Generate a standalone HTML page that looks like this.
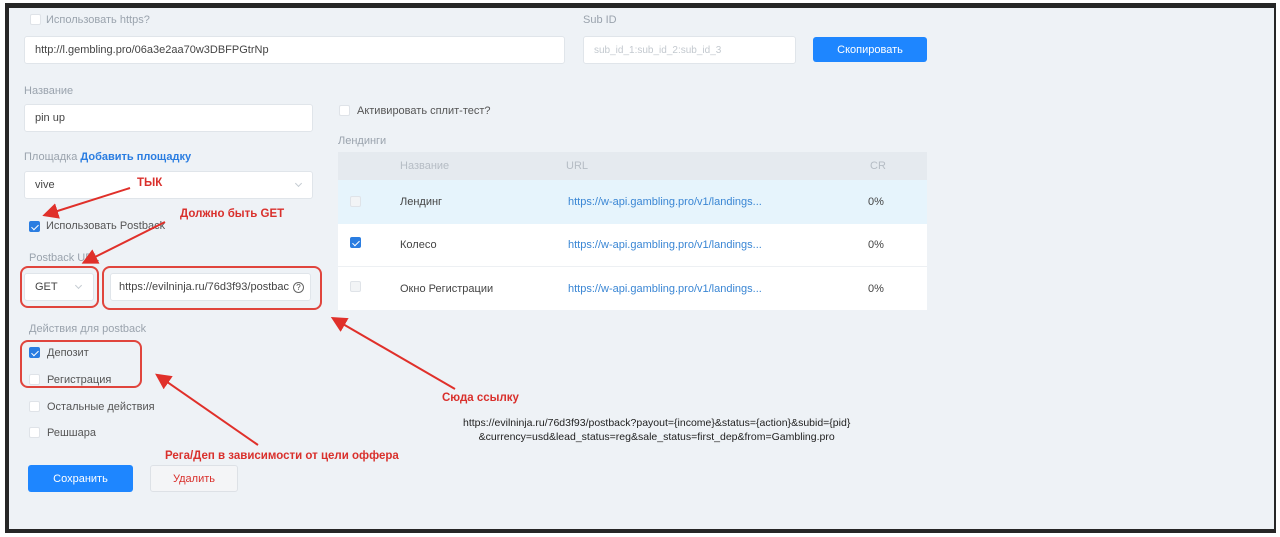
<!DOCTYPE html>
<html><head><meta charset="utf-8"><style>
*{box-sizing:border-box;margin:0;padding:0}
body{width:1280px;height:537px;background:#fff;position:relative;overflow:hidden;font-family:"Liberation Sans","DejaVu Sans",sans-serif;font-size:11px;color:#444}
.frame{position:absolute;left:5px;top:3px;width:1271px;height:530px;border:4px solid #262626;border-top-width:5px;border-right-width:2px;background:#eef2f6}
.a{position:absolute;white-space:nowrap}
.lbl{color:#9aa3ad;font-size:11px}
.inp{position:absolute;background:#fff;border:1px solid #e0e5ea;border-radius:3px;padding-left:10px;display:flex;align-items:center;font-size:11px;color:#444}
.cb{position:absolute;width:11px;height:11px;border:1px solid #dfe3e8;background:#fff;border-radius:2px}
.cb.on{background:#2a7de1;border-color:#2a7de1}
.cb.on::after{content:"";position:absolute;left:3px;top:1px;width:3px;height:6px;border:solid #fff;border-width:0 1.6px 1.6px 0;transform:rotate(45deg)}
.red{color:#d9302c;font-weight:bold;font-size:11.5px}
.rbox{position:absolute;border:2px solid #e0453d;border-radius:8px}
.btn{position:absolute;border-radius:3px;display:flex;align-items:center;justify-content:center;font-size:11px}
.chev{position:absolute;width:5px;height:5px;border:solid #c5cbd2;border-width:0 1px 1px 0;transform:rotate(45deg)}
.tr{position:absolute;left:338px;width:589px;display:flex;align-items:center;font-size:11px}
.link{color:#3a86d4}
</style></head><body>
<div class="frame"></div>

<div class="cb" style="left:30px;top:14px"></div>
<div class="a lbl" style="left:46px;top:14px">Использовать https?</div>
<div class="inp" style="left:24px;top:36px;width:541px;height:28px">http://l.gembling.pro/06a3e2aa70w3DBFPGtrNp</div>
<div class="a lbl" style="left:583px;top:14px">Sub ID</div>
<div class="inp" style="left:583px;top:36px;width:213px;height:28px;color:#c3c9cf;font-size:10px">sub_id_1:sub_id_2:sub_id_3</div>
<div class="btn" style="left:813px;top:37px;width:114px;height:25px;background:#1e86ff;color:#fff">Скопировать</div>

<div class="a lbl" style="left:24px;top:85px">Название</div>
<div class="inp" style="left:24px;top:104px;width:289px;height:28px">pin up</div>
<div class="cb" style="left:339px;top:105px"></div>
<div class="a" style="left:357px;top:105px;font-size:11px;color:#555">Активировать сплит-тест?</div>
<div class="a lbl" style="left:338px;top:135px">Лендинги</div>

<div class="tr" style="top:152px;height:28px;background:#e5eaef;color:#b5bcc4">
<span class="a" style="left:62px">Название</span><span class="a" style="left:228px">URL</span><span class="a" style="left:532px">CR</span></div>
<div class="tr" style="top:180px;height:44px;background:#e6f4fc">
<div class="cb" style="left:12px;top:16px;background:#f2f4f6"></div><span class="a" style="left:62px">Лендинг</span><span class="a link" style="left:230px">https://w-api.gambling.pro/v1/landings...</span><span class="a" style="left:530px">0%</span></div>
<div class="tr" style="top:224px;height:43px;background:#fff;border-bottom:1px solid #edf0f3">
<div class="cb on" style="left:12px;top:13px"></div><span class="a" style="left:62px">Колесо</span><span class="a link" style="left:230px">https://w-api.gambling.pro/v1/landings...</span><span class="a" style="left:530px">0%</span></div>
<div class="tr" style="top:267px;height:43px;background:#fff">
<div class="cb" style="left:12px;top:14px;background:#f2f4f6"></div><span class="a" style="left:62px">Окно Регистрации</span><span class="a link" style="left:230px">https://w-api.gambling.pro/v1/landings...</span><span class="a" style="left:530px">0%</span></div>

<div class="a lbl" style="left:24px;top:151px">Площадка <b style="color:#2a7de1">Добавить площадку</b></div>
<div class="inp" style="left:24px;top:171px;width:289px;height:28px">vive</div>
<div class="chev" style="left:296px;top:181px"></div>
<div class="cb on" style="left:29px;top:221px"></div>
<div class="a" style="left:46px;top:220px;font-size:11px;color:#555">Использовать Postback</div>
<div class="a lbl" style="left:29px;top:252px">Postback URL</div>
<div class="inp" style="left:24px;top:273px;width:70px;height:28px">GET</div>
<div class="chev" style="left:76px;top:283px"></div>
<div class="inp" style="left:110px;top:273px;width:201px;height:28px;padding-left:8px">https://evilninja.ru/76d3f93/postbac <span style="margin-left:4px;display:inline-block;width:11px;height:11px;border:1px solid #666;border-radius:50%;font-size:8px;line-height:9px;text-align:center">?</span></div>
<div class="rbox" style="left:20px;top:266px;width:79px;height:42px"></div>
<div class="rbox" style="left:102px;top:266px;width:220px;height:44px"></div>

<div class="a lbl" style="left:29px;top:323px">Действия для postback</div>
<div class="cb on" style="left:29px;top:347px"></div><div class="a" style="left:47px;top:347px;font-size:11px;color:#555">Депозит</div>
<div class="cb" style="left:29px;top:374px"></div><div class="a" style="left:47px;top:374px;font-size:11px;color:#555">Регистрация</div>
<div class="cb" style="left:29px;top:401px"></div><div class="a" style="left:47px;top:401px;font-size:11px;color:#555">Остальные действия</div>
<div class="cb" style="left:29px;top:427px"></div><div class="a" style="left:47px;top:427px;font-size:11px;color:#555">Решшара</div>
<div class="rbox" style="left:20px;top:340px;width:122px;height:48px"></div>

<div class="btn" style="left:28px;top:465px;width:105px;height:27px;background:#1e86ff;color:#fff">Сохранить</div>
<div class="btn" style="left:150px;top:465px;width:88px;height:27px;background:#f4f5f7;border:1px solid #dde1e6;color:#d9302c">Удалить</div>

<div class="a red" style="left:137px;top:177px">ТЫК</div>
<div class="a red" style="left:180px;top:208px">Должно быть GET</div>
<div class="a red" style="left:442px;top:392px">Сюда ссылку</div>
<div class="a red" style="left:165px;top:450px">Рега/Деп в зависимости от цели оффера</div>
<div class="a" style="left:463px;top:416px;font-size:10.5px;color:#222;text-align:center;line-height:14px">https://evilninja.ru/76d3f93/postback?payout={income}&amp;status={action}&amp;subid={pid}<br>&amp;currency=usd&amp;lead_status=reg&amp;sale_status=first_dep&amp;from=Gambling.pro</div>

<svg width="1280" height="537" style="position:absolute;left:0;top:0">
<defs><marker id="h" markerWidth="8" markerHeight="8" refX="5" refY="4" orient="auto"><path d="M0,0 L8,4 L0,8 z" fill="#e0302a"/></marker></defs>
<g stroke="#e0302a" stroke-width="2" fill="none" marker-end="url(#h)">
<line x1="130" y1="188" x2="48" y2="214"/>
<line x1="165" y1="222" x2="87" y2="261"/>
<line x1="455" y1="389" x2="336" y2="320"/>
<line x1="258" y1="445" x2="160" y2="377"/>
</g></svg>
</body></html>
